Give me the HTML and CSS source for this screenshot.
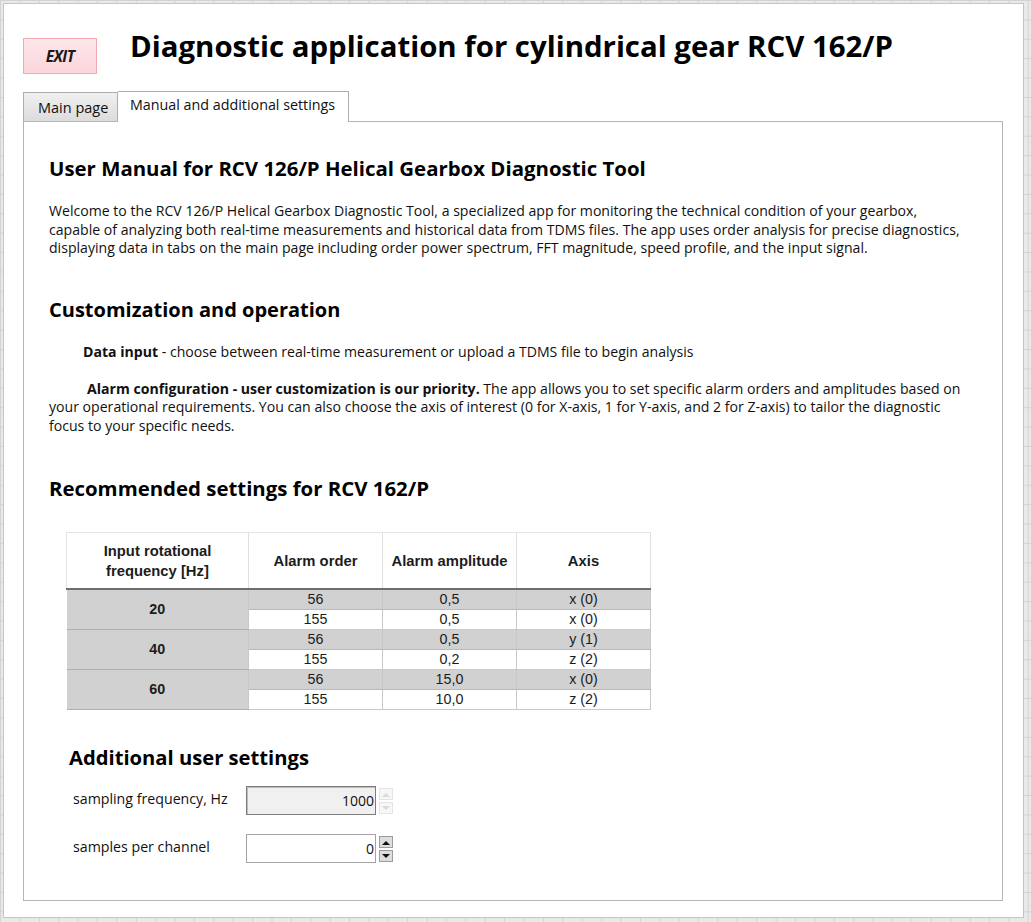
FILE: index.html
```html
<!DOCTYPE html>
<html>
<head>
<meta charset="utf-8">
<title>Diagnostic application</title>
<link rel="stylesheet" href="styles.css">
</head>
<body>
<div class="panel">
  <header class="top">
    <button class="exit-btn">EXIT</button>
    <h1 class="title">Diagnostic application for cylindrical gear RCV 162/P</h1>
  </header>

  <div class="tabs">
    <div class="tab-strip">
      <div class="tab">Main page</div>
      <div class="tab tab-active">Manual and additional settings</div>
    </div>
    <div class="tab-body">
      <h2 class="sec sec-first">User Manual for RCV 126/P Helical Gearbox Diagnostic Tool</h2>
      <p class="txt intro">Welcome to the RCV 126/P Helical Gearbox Diagnostic Tool, a specialized app for monitoring the technical condition of your gearbox,<br>capable of analyzing both real-time measurements and historical data from TDMS files. The app uses order analysis for precise diagnostics,<br>displaying data in tabs on the main page including order power spectrum, FFT magnitude, speed profile, and the input signal.</p>

      <h2 class="sec sec-custom">Customization and operation</h2>
      <p class="txt data-input"><b>Data input</b> - choose between real-time measurement or upload a TDMS file to begin analysis</p>
      <p class="txt alarm"><span class="indent"></span><b>Alarm configuration - user customization is our priority.</b> The app allows you to set specific alarm orders and amplitudes based on<br>your operational requirements. You can also choose the axis of interest (0 for X-axis, 1 for Y-axis, and 2 for Z-axis) to tailor the diagnostic<br>focus to your specific needs.</p>

      <h2 class="sec sec-rec">Recommended settings for RCV 162/P</h2>

      <table class="settings">
        <thead>
          <tr>
            <th class="c1">Input rotational<br>frequency [Hz]</th>
            <th class="c2">Alarm order</th>
            <th class="c3">Alarm amplitude</th>
            <th class="c4">Axis</th>
          </tr>
        </thead>
        <tbody>
          <tr class="g"><td class="freq" rowspan="2">20</td><td>56</td><td>0,5</td><td>x (0)</td></tr>
          <tr class="w"><td>155</td><td>0,5</td><td>x (0)</td></tr>
          <tr class="g"><td class="freq" rowspan="2">40</td><td>56</td><td>0,5</td><td>y (1)</td></tr>
          <tr class="w"><td>155</td><td>0,2</td><td>z (2)</td></tr>
          <tr class="g"><td class="freq" rowspan="2">60</td><td>56</td><td>15,0</td><td>x (0)</td></tr>
          <tr class="w"><td>155</td><td>10,0</td><td>z (2)</td></tr>
        </tbody>
      </table>

      <h2 class="sec sec-add">Additional user settings</h2>

      <div class="field field-1">
        <span class="lbl">sampling frequency, Hz</span>
        <div class="num num-disabled">1000</div>
        <div class="spin spin-disabled">
          <span class="sb"><svg width="8" height="5" viewBox="0 0 8 5"><path d="M0 5 L4 1 L8 5 Z"/></svg></span>
          <span class="sb"><svg width="8" height="5" viewBox="0 0 8 5"><path d="M0 0 L8 0 L4 4 Z"/></svg></span>
        </div>
      </div>
      <div class="field field-2">
        <span class="lbl">samples per channel</span>
        <div class="num">0</div>
        <div class="spin">
          <span class="sb"><svg width="8" height="5" viewBox="0 0 8 5"><path d="M0 5 L4 1 L8 5 Z"/></svg></span>
          <span class="sb"><svg width="8" height="5" viewBox="0 0 8 5"><path d="M0 0 L8 0 L4 4 Z"/></svg></span>
        </div>
      </div>
    </div>
  </div>
</div>
</body>
</html>
```
FILE: styles.css
```css
html, body {
  margin: 0;
  padding: 0;
}
body {
  width: 1031px;
  height: 922px;
  overflow: hidden;
  background-color: #e9e9e9;
  background-image:
    linear-gradient(to right, #d3d3d3 1px, transparent 1px),
    linear-gradient(to bottom, #d3d3d3 1px, transparent 1px);
  background-size: 19.4px 19.4px;
  background-position: 0 0;
  font-family: "Open Sans", "Noto Sans", sans-serif;
  color: #111;
}
.panel {
  margin: 3px 0 0 3px;
  width: 1021px;
  height: 915px;
  background: #fff;
  border: 1px solid #c4c4c4;
  padding-left: 19px;
  box-sizing: border-box;
}
.top {
  display: flex;
  align-items: flex-start;
  height: 87px;
}
.exit-btn {
  margin-top: 34px;
  width: 74px;
  height: 36px;
  background: linear-gradient(#fde6ea, #fbd6dc);
  border: 1px solid #f3a7b1;
  font-family: "Open Sans", sans-serif;
  font-weight: 700;
  font-style: italic;
  font-size: 15.5px;
  color: #1a1a1a;
  letter-spacing: -0.6px;
  padding: 0;
}
.title {
  margin: 23px 0 0 33px;
  font-size: 29.4px;
  line-height: 38px;
  font-weight: 700;
  color: #000;
  white-space: nowrap;
}
.tabs {
  width: 980px;
}
.tab-strip {
  display: flex;
  align-items: flex-end;
  height: 30px;
}
.tab {
  height: 29px;
  box-sizing: border-box;
  width: 95px;
  border: 1px solid #adadad;
  border-bottom: none;
  background: linear-gradient(#f0f0f0, #dcdcdc);
  font-size: 14.5px;
  line-height: 30px;
  padding-left: 14px;
  color: #111;
  white-space: nowrap;
}
.tab-active {
  position: relative;
  height: 31px;
  width: 231px;
  background: #fff;
  border-left: none;
  font-size: 14.3px;
  line-height: 26px;
  padding-left: 12px;
  margin-bottom: -1px;
}
.tab-body {
  height: 780px;
  box-sizing: border-box;
  border: 1px solid #b4b4b4;
  padding-left: 25px;
  overflow: hidden;
}
.sec {
  margin: 0;
  font-size: 20.4px;
  line-height: 24px;
  font-weight: 700;
  color: #000;
  white-space: nowrap;
}
.sec-first { margin-top: 34px; }
.sec-custom { font-size: 20px; }
.txt {
  margin: 0;
  font-size: 14.1px;
  line-height: 18.5px;
  white-space: nowrap;
  color: #111;
}
.txt b { font-weight: 700; }
.intro { margin-top: 22px; }
.sec-custom { margin-top: 40px; }
.data-input { margin-top: 21px; padding-left: 34px; }
.alarm { margin-top: 18.5px; }
.indent { display: inline-block; width: 38px; }
.sec-rec { margin-top: 41px; }

.settings {
  margin: 32px 0 0 17px;
  border-collapse: collapse;
  font-family: "Liberation Sans", Arial, sans-serif;
  font-size: 14.3px;
  color: #1c1c1c;
}
.settings th {
  height: 55px;
  padding: 0;
  font-size: 14.8px;
  font-weight: 700;
  line-height: 20px;
  border-right: 1px solid #e0e0e0;
  border-top: 1px solid #e4e4e4;
  border-bottom: 2px solid #6e6e6e;
  background: #fff;
}
.settings th.c1 { width: 181px; border-left: 1px solid #e4e4e4; }
.settings th.c2 { width: 133px; }
.settings th.c3 { width: 133px; }
.settings th.c4 { width: 133px; }
.settings td {
  height: 19px;
  padding: 0;
  text-align: center;
  line-height: 19px;
  border-bottom: 1px solid #b9b9b9;
  border-right: 1px solid #c8c8c8;
}
.settings tr.g td { background: #d1d1d1; }
.settings tr.w td { background: #fff; border-bottom-color: #c9c9c9; }
.settings td.freq {
  background: #d1d1d1;
  font-weight: 700;
  border-bottom: 1px solid #b0b0b0;
}

.sec-add { margin: 35px 0 0 20px; font-size: 20.2px; }

.field {
  display: flex;
  align-items: flex-start;
  margin-left: 24px;
  height: 29px;
}
.field-1 { margin-top: 17px; }
.field-2 { margin-top: 19px; }
.lbl {
  width: 173px;
  font-size: 14.2px;
  line-height: 25px;
  color: #111;
  white-space: nowrap;
}
.num {
  width: 130px;
  height: 29px;
  box-sizing: border-box;
  border: 1px solid #a3a3a3;
  background: #fff;
  text-align: right;
  padding-right: 1px;
  font-size: 14px;
  line-height: 27px;
  color: #111;
}
.num-disabled {
  background: #f0f0f0;
  border: 1px solid #7d7d7d;
  box-shadow: inset 1px 1px 0 #bdbdbd;
}
.spin {
  margin-left: 3px;
  margin-top: 2px;
  display: flex;
  flex-direction: column;
  gap: 2px;
}
.sb {
  width: 14px;
  height: 12px;
  box-sizing: border-box;
  border: 1px solid #9c9c9c;
  background: #dedede;
  display: flex;
  align-items: center;
  justify-content: center;
}
.sb svg path { fill: #111; }
.spin-disabled .sb {
  border-color: #e4e4e4;
  background: #f7f7f7;
}
.spin-disabled .sb svg path { fill: #dadada; }
```
